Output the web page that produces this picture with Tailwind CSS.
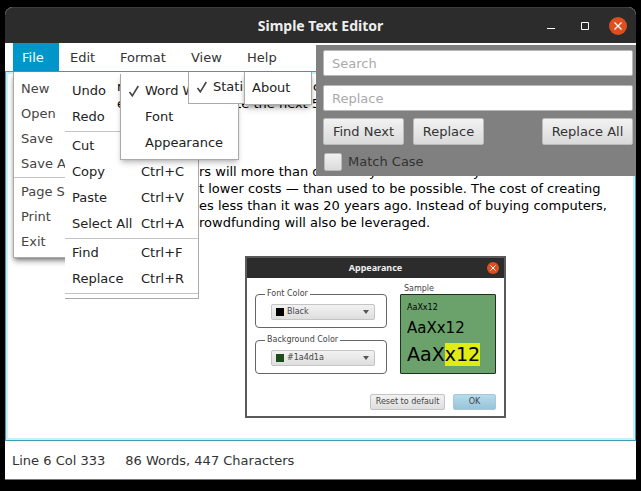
<!DOCTYPE html>
<html lang="en">
<head>
<meta charset="utf-8">
<meta name="viewport" content="width=device-width, initial-scale=1">
<title>Simple Text Editor</title>
<script src="https://cdn.jsdelivr.net/npm/@tailwindcss/browser@4"></script>
</head>
<body class="bg-black font-['DejaVu_Sans',sans-serif] text-[13px] text-[#333]">
<div class="flex h-screen flex-col px-[5px] pt-[7px] pb-[11px]">
  <div class="relative flex min-h-0 flex-1 flex-col rounded-t-lg bg-white">
    <header class="grid h-9 shrink-0 grid-cols-3 items-center rounded-t-lg border-t border-[#3c3c3c] bg-[#2c2c2c] px-[9px] text-white">
      <span></span>
      <h1 class="text-center font-['Noto_Sans',sans-serif] text-sm font-bold whitespace-nowrap text-[#eee]">Simple Text Editor</h1>
      <div class="flex items-center justify-end gap-[14px]">
        <button aria-label="Minimize" class="flex size-5 items-center justify-center"><svg class="size-3" viewBox="0 0 12 12"><path d="M2 8.500h8" stroke="#fff" /></svg></button>
        <button aria-label="Maximize" class="flex size-5 items-center justify-center"><svg class="size-3" viewBox="0 0 12 12"><path d="M2.500 2.500h7v7h-7z" fill="none" stroke="#fff" /></svg></button>
        <button aria-label="Close" class="flex size-[18px] items-center justify-center rounded-full bg-[#dd4f1f]"><svg class="size-3" viewBox="0 0 12 12"><path d="M2.500 2.500l7 7m0-7l-7 7" stroke="#fff" stroke-width="1.300" /></svg></button>
      </div>
    </header>

    <nav class="flex h-[28px] shrink-0 items-stretch pl-2 text-[#333]">
      <button class="w-[46px] bg-[#0096c9] pt-[2px] pl-[9px] text-left text-white">File</button>
      <button class="w-[50px] pt-[2px] pl-[11px] text-left">Edit</button>
      <button class="w-[70px] pt-[2px] pl-[11px] text-left">Format</button>
      <button class="w-[56px] pt-[2px] pl-3 text-left">View</button>
      <button class="w-[56px] pt-[2px] pl-3 text-left">Help</button>
    </nav>

    <main class="min-h-0 flex-1 overflow-hidden border border-[#3d9db5] pt-[6px] text-black ring-2 ring-[#c5f1f8] ring-inset">
      <div class="relative z-10 w-[312px] overflow-hidden pl-[111px] leading-[17px] whitespace-nowrap">
        <p class="flex"><span class="w-[196px] shrink-0">new founders will use</span><span>crowds</span></p>
        <p>even more to create the next 5,</p>
      </div>
      <div class="mt-[51px] pl-[193px] leading-[17px] whitespace-nowrap">
        <p>rs will more than double by 2025. And they'll be able to invent</p>
        <p>t lower costs — than used to be possible. The cost of creating</p>
        <p>es less than it was 20 years ago. Instead of buying computers,</p>
        <p>rowdfunding will also be leveraged.</p>
      </div>
    </main>

    <footer class="flex h-[39px] shrink-0 items-center gap-5 border-b border-[#777] pt-[2px] pl-[7px]">
      <span>Line 6 Col 333</span>
      <span>86 Words, 447 Characters</span>
    </footer>

    <!-- File menu -->
    <div role="menu" aria-label="File" class="absolute top-[65px] left-[8px] flex w-[110px] flex-col border border-t-0 border-[#aaa] bg-white pt-1 pb-[3px] text-[#444] shadow-md shadow-black/40">
      <button role="menuitem" class="h-[25px] pl-[7px] text-left">New</button>
      <button role="menuitem" class="h-[25px] pl-[7px] text-left">Open</button>
      <button role="menuitem" class="h-[25px] pl-[7px] text-left">Save</button>
      <button role="menuitem" class="h-[25px] pl-[7px] text-left">Save As</button>
      <hr class="my-px border-[#c4c4c4]">
      <button role="menuitem" class="h-[25px] pl-[7px] text-left">Page Setup</button>
      <button role="menuitem" class="h-[25px] pl-[7px] text-left">Print</button>
      <button role="menuitem" class="h-[25px] pl-[7px] text-left">Exit</button>
    </div>

    <!-- Edit menu -->
    <div role="menu" aria-label="Edit" class="absolute top-[65px] left-[60px] flex w-[134px] flex-col border-r border-b border-[#aaa] bg-white pt-[6px] pb-1 text-[#222]">
      <button role="menuitem" class="h-[26px] pl-[7px] text-left">Undo</button>
      <button role="menuitem" class="h-[26px] pl-[7px] text-left">Redo</button>
      <hr class="my-px border-[#c4c4c4]">
      <button role="menuitem" class="flex h-[26px] items-center pl-[7px]"><span class="w-[69px] text-left">Cut</span></button>
      <button role="menuitem" class="flex h-[26px] items-center pl-[7px]"><span class="w-[69px] text-left">Copy</span><span>Ctrl+C</span></button>
      <button role="menuitem" class="flex h-[26px] items-center pl-[7px]"><span class="w-[69px] text-left">Paste</span><span>Ctrl+V</span></button>
      <button role="menuitem" class="flex h-[26px] items-center pl-[7px]"><span class="w-[69px] text-left whitespace-nowrap">Select All</span><span>Ctrl+A</span></button>
      <hr class="my-px border-[#c4c4c4]">
      <button role="menuitem" class="flex h-[26px] items-center pl-[7px]"><span class="w-[69px] text-left">Find</span><span>Ctrl+F</span></button>
      <button role="menuitem" class="flex h-[26px] items-center pl-[7px]"><span class="w-[69px] text-left">Replace</span><span>Ctrl+R</span></button>
      <hr class="mt-px border-[#c4c4c4]">
    </div>

    <!-- Format menu -->
    <div role="menu" aria-label="Format" class="absolute top-[67px] left-[115px] z-20 flex w-[119px] flex-col border border-t-0 border-[#aaa] bg-white pt-[4px] pb-[3px] text-[#222] shadow-md shadow-black/20">
      <button role="menuitem" class="flex h-[26px] items-center gap-[5px] pl-[7px] whitespace-nowrap"><svg class="size-3" viewBox="0 0 12 12"><path d="M1.500 7l2.800 3.800L10.300 1" fill="none" stroke="#444" stroke-width="1.600" /></svg>Word Wrap</button>
      <button role="menuitem" class="h-[26px] pl-6 text-left">Font</button>
      <button role="menuitem" class="h-[26px] pl-6 text-left">Appearance</button>
    </div>

    <!-- View menu -->
    <div role="menu" aria-label="View" class="absolute top-[65px] left-[183px] z-20 flex w-[57px] flex-col overflow-hidden border-b border-l border-[#aaa] bg-white pt-[2px] pb-[3px] text-[#222]">
      <button role="menuitem" class="flex h-[26px] items-center gap-[5px] pl-[7px] whitespace-nowrap"><svg class="size-3 shrink-0" viewBox="0 0 12 12"><path d="M1.500 7l2.800 3.800L10.300 1" fill="none" stroke="#444" stroke-width="1.600" /></svg>Stati</button>
    </div>

    <!-- Help menu -->
    <div role="menu" aria-label="Help" class="absolute top-[65px] left-[239px] z-20 flex w-[68px] flex-col border border-t-0 border-[#aaa] bg-white pt-[3px] pb-[3px] text-[#222] shadow-md shadow-black/30">
      <button role="menuitem" class="h-[26px] pl-[7px] text-left">About</button>
    </div>

    <!-- Find and replace -->
    <form class="absolute top-[38px] right-0 left-[311px] z-30 flex flex-col gap-[9px] bg-[#808080] pt-[5px] pr-[3px] pb-1 pl-[7px]">
      <input type="text" aria-label="Search" placeholder="Search" class="h-[26px] w-full rounded-xs border border-[#b8b8b8] bg-white px-2 placeholder:text-[#aaa]">
      <input type="text" aria-label="Replace with" placeholder="Replace" class="h-[26px] w-full rounded-xs border border-[#b8b8b8] bg-white px-2 placeholder:text-[#aaa]">
      <div class="-mt-[2px] flex gap-[9px]">
        <button type="button" class="h-[27px] w-[81px] rounded-xs border border-[#bbb] bg-linear-to-b from-[#f2f2f2] to-[#dadada] whitespace-nowrap">Find Next</button>
        <button type="button" class="h-[27px] w-[71px] rounded-xs border border-[#bbb] bg-linear-to-b from-[#f2f2f2] to-[#dadada]">Replace</button>
        <button type="button" class="ml-auto h-[27px] w-[91px] rounded-xs border border-[#bbb] bg-linear-to-b from-[#f2f2f2] to-[#dadada] whitespace-nowrap">Replace All</button>
      </div>
      <label class="-mt-[2px] flex items-center gap-[6px] pl-px"><input type="checkbox" class="size-[18px] appearance-none rounded-xs border border-[#bbb] bg-linear-to-b from-[#f2f2f2] to-[#dadada]">Match Case</label>
    </form>

    <!-- Appearance dialog -->
    <section role="dialog" aria-labelledby="dlg" class="absolute top-[249px] left-[240px] z-20 flex w-[261px] flex-col border-2 border-[#5a5a5a] bg-white text-[8px] leading-[10px] text-[#444]">
      <div class="grid h-5 grid-cols-3 items-center bg-[#2c2c2c] pr-[5px] pl-[5px]">
        <span></span>
        <h2 id="dlg" class="text-center font-['Noto_Sans',sans-serif] text-[9px] font-bold text-[#eee]">Appearance</h2>
        <button aria-label="Close dialog" class="flex size-3 items-center justify-center justify-self-end rounded-full bg-[#dd4f1f]"><svg class="size-2" viewBox="0 0 8 8"><path d="M1.500 1.500l5 5m0-5l-5 5" stroke="#fff" /></svg></button>
      </div>
      <div class="flex justify-between px-2 pt-[6px]">
        <div class="flex w-[132px] flex-col gap-[7px] pt-[5px]">
          <fieldset class="h-[39px] rounded-[4px] border border-[#666] pl-[15px]">
            <legend class="-ml-[6px] px-[2px]">Font Color</legend>
            <div class="relative flex items-center">
              <select aria-label="Font color" class="mt-[5px] h-4 w-[104px] appearance-none rounded-xs border border-[#c4c4c4] bg-linear-to-b from-[#f2f2f2] to-[#dedede] pl-[15px]"><option>Black</option></select>
              <span class="pointer-events-none absolute top-[9px] left-[5px] size-2 bg-black"></span>
              <svg class="pointer-events-none absolute top-[11px] left-[92px] h-1 w-[6px]" viewBox="0 0 6 4"><path d="M0 0h6L3 4z" fill="#555" /></svg>
            </div>
          </fieldset>
          <fieldset class="h-[39px] rounded-[4px] border border-[#666] pl-[15px]">
            <legend class="-ml-[6px] px-[2px]">Background Color</legend>
            <div class="relative flex items-center">
              <select aria-label="Background color" class="mt-[5px] h-4 w-[104px] appearance-none rounded-xs border border-[#c4c4c4] bg-linear-to-b from-[#f2f2f2] to-[#dedede] pl-[15px]"><option>#1a4d1a</option></select>
              <span class="pointer-events-none absolute top-[9px] left-[5px] size-2 bg-[#1a4d1a]"></span>
              <svg class="pointer-events-none absolute top-[11px] left-[92px] h-1 w-[6px]" viewBox="0 0 6 4"><path d="M0 0h6L3 4z" fill="#555" /></svg>
            </div>
          </fieldset>
        </div>
        <div class="w-24">
          <h3 class="pl-1">Sample</h3>
          <div class="h-20 rounded-[1px] border border-[#1c331c] bg-[#6ba26b] pt-2 pl-[6px] text-black">
            <p>AaXx12</p>
            <p class="pt-[5px] text-[15px] leading-5">AaXx12</p>
            <p class="pt-[5px] text-[19px] leading-[23px]">AaX<mark class="inline-block bg-[#e0ec14] text-black">x12</mark></p>
          </div>
        </div>
      </div>
      <div class="flex justify-end gap-2 px-2 pt-5 pb-[6px]">
        <button class="h-4 w-[75px] rounded-xs border border-[#c4c4c4] bg-linear-to-b from-[#f2f2f2] to-[#dedede]">Reset to default</button>
        <button class="h-4 w-[43px] rounded-xs border border-[#a5c8d8] bg-linear-to-b from-[#b5dced] to-[#98c4d9]">OK</button>
      </div>
    </section>
  </div>
</div>
</body>
</html>
